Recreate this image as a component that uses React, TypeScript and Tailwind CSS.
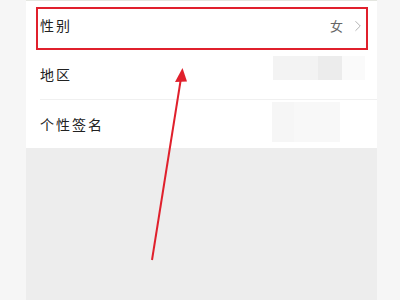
import { ChevronRight } from 'lucide-react';

const font = { fontFamily: '"Noto Sans CJK SC", "Noto Sans", sans-serif' };

export default function App() {
    return (
        <div className="w-[400px] h-[300px] bg-[#f6f6f6] overflow-hidden" style={font}>
            <div className="relative ml-[26px] w-[351px] h-[300px] bg-[#ededed]">
                {/* Profile rows */}
                <div className="bg-white h-[148px] border-t border-[#e4e6e0] flex flex-col">
                    <div className="h-[50px] flex items-center pl-[14px] pr-[10px]">
                        <span className="text-[14px] text-[#222] tracking-[2px]">性别</span>
                        <span className="ml-auto text-[13px] text-[#666]">女</span>
                        <ChevronRight className="w-[18px] h-[18px] text-[#aaa] ml-[6px]" strokeWidth={1.2} />
                    </div>
                    <div className="h-[50px] flex items-center ml-[14px] border-b border-[#f0f0f0]">
                        <span className="text-[14px] text-[#222] tracking-[2px]">地区</span>
                        <div className="ml-auto mr-[12px] flex h-[24px] self-start mt-[5px]">
                            <div className="w-[45px] bg-[#f3f3f3]" />
                            <div className="w-[24px] bg-[#ececec]" />
                            <div className="w-[23px] bg-[#fafafa]" />
                        </div>
                    </div>
                    <div className="h-[48px] flex items-center pl-[14px]">
                        <span className="text-[14px] text-[#222] tracking-[2px]">个性签名</span>
                        <div className="ml-auto mr-[37px] flex h-[40px] self-start mt-[2px]">
                            <div className="w-[22px] bg-[#f6f6f6]" />
                            <div className="w-[46px] bg-[#f8f8f8]" />
                        </div>
                    </div>
                </div>

                {/* Annotation box */}
                <div className="absolute left-[10px] top-[7px] w-[332px] h-[43px] border-2 border-[#e0202c]" />

                {/* Annotation arrow */}
                <svg className="absolute left-0 top-0" width="351" height="300" viewBox="0 0 351 300">
                    <line x1="126" y1="260" x2="155" y2="78" stroke="#e0202c" strokeWidth="2" />
                    <polygon points="156.5,68 149,82 161,81.5" fill="#e0202c" />
                </svg>
            </div>
        </div>
    );
}
